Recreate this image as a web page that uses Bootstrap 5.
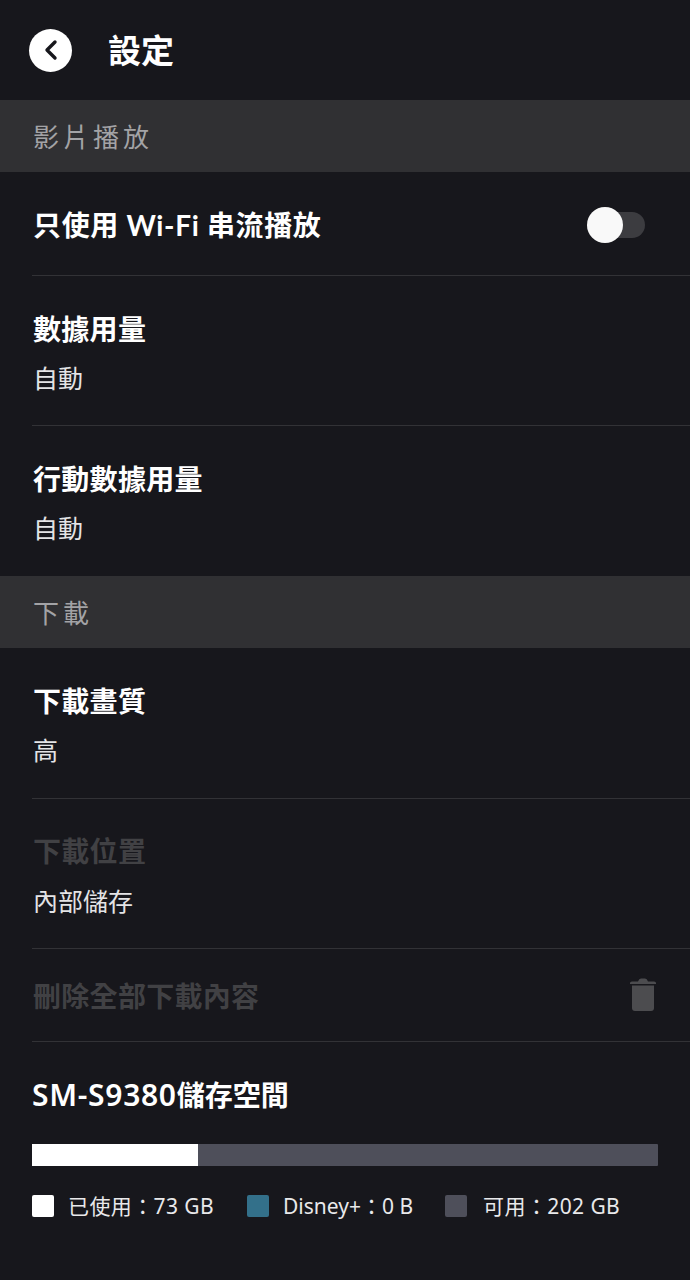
<!DOCTYPE html>
<html lang="zh-Hant">
<head>
<meta charset="utf-8">
<title>設定</title>
<link rel="stylesheet" href="https://cdn.jsdelivr.net/npm/bootstrap@5.3.0/dist/css/bootstrap.min.css">
<style>
html,body{background:#17171c;}
body{width:690px;height:1280px;overflow:hidden;color:#fff;font-family:"Lato","Noto Sans CJK TC",sans-serif;}
.top-bar{height:100px;padding-left:29px;gap:36px;}
.back-btn{width:43px;height:43px;border-radius:50%;background:#fff;border:0;padding:0;}
.page-title{font-size:33px;font-weight:700;margin:0;line-height:1;}
.sect-head{height:72px;padding-left:33px;padding-top:2px;background:#303033;color:#a3a3a6;font-size:26px;letter-spacing:4px;}
.set-row{margin-left:32px;padding-left:1px;border-bottom:1px solid #323236;}
.row-tall{height:150px;padding-top:34px;}
.row-grow{height:151px;}
.row-pos{padding-top:33px;}
.row-pos .row-val{margin-top:14px;}
.row-first{height:104px;padding-right:45px;padding-top:2px;}
.row-del{height:93px;padding-right:34px;padding-top:1px;}
.trash-icon{margin-bottom:3px;}
.row-name{font-size:28px;font-weight:700;line-height:38px;letter-spacing:.3px;}
.wifi-row{letter-spacing:.65px;}
.row-val{font-size:25px;line-height:34px;margin-top:13px;color:#e4e4e6;}
.dim{color:#414144;}
.row-last{border-bottom:0;}
.switch-track{width:58px;height:26px;}
.track-bg{position:absolute;right:0;top:0;width:58px;height:26px;border-radius:13px;background:#3c3c40;}
.knob{position:absolute;left:0;top:-5px;width:36px;height:36px;border-radius:50%;background:#f9f9f9;}
.store{padding:0 32px;}
.store-title{font-size:28px;font-weight:700;line-height:38px;margin-top:34px;font-family:"Noto Sans","Noto Sans CJK TC",sans-serif;}
.store-model{font-size:30px;font-weight:600;letter-spacing:.7px;}
.store-bar{height:22px;margin-top:30px;background:#4e4f5a;border-radius:1px;}
.store-used{width:166px;background:#fff;}
.legend{margin-top:27px;font-size:21px;letter-spacing:.4px;line-height:26px;color:#e9e9eb;font-family:"Noto Sans","Noto Sans CJK TC",sans-serif;}
.swatch{width:22px;height:22px;border-radius:2px;margin-right:14px;flex:none;}
.leg-item{margin-right:33px;}
.leg-item:nth-child(2){margin-right:32px;letter-spacing:0;}
.leg-item:nth-child(3) .swatch{margin-right:16px;}
</style>
</head>
<body>
<header class="top-bar d-flex align-items-center">
  <button class="back-btn d-flex align-items-center justify-content-center" aria-label="返回">
    <svg width="20" height="24" viewBox="0 0 20 24"><path d="M14 4 L6 12 L14 20" fill="none" stroke="#17171c" stroke-width="3.4" stroke-linecap="round" stroke-linejoin="round"/></svg>
  </button>
  <h1 class="page-title">設定</h1>
</header>

<div class="sect-head d-flex align-items-center">影片播放</div>
<div class="set-row row-first d-flex align-items-center justify-content-between">
  <div class="row-name wifi-row">只使用 Wi-Fi 串流播放</div>
  <div class="switch-track position-relative"><span class="track-bg"></span><span class="knob"></span></div>
</div>
<div class="set-row row-tall"><div class="row-name">數據用量</div><div class="row-val">自動</div></div>
<div class="set-row row-tall row-last"><div class="row-name">行動數據用量</div><div class="row-val">自動</div></div>

<div class="sect-head d-flex align-items-center">下載</div>
<div class="set-row row-tall row-grow"><div class="row-name">下載畫質</div><div class="row-val">高</div></div>
<div class="set-row row-tall row-pos"><div class="row-name dim">下載位置</div><div class="row-val">內部儲存</div></div>
<div class="set-row row-del d-flex align-items-center justify-content-between">
  <div class="row-name dim">刪除全部下載內容</div>
  <svg class="trash-icon" width="26" height="33" viewBox="0 0 26 33"><path d="M0 5 Q0 3.5 2 3.5 H8 Q9 .5 11 .5 H15 Q17 .5 18 3.5 H24 Q26 3.5 26 5 V6 H0 Z" fill="#4c4c4f"/><path d="M2 7.5 H24 V30 Q24 33 21 33 H5 Q2 33 2 30 Z" fill="#4c4c4f"/></svg>
</div>

<section class="store">
  <div class="store-title"><span class="store-model">SM-S9380</span>儲存空間</div>
  <div class="store-bar d-flex"><div class="store-used"></div></div>
  <div class="legend d-flex align-items-center">
    <span class="leg-item d-flex align-items-center"><span class="swatch bg-white"></span>已使用：73 GB</span>
    <span class="leg-item d-flex align-items-center"><span class="swatch" style="background:#33708a"></span>Disney+：0 B</span>
    <span class="leg-item d-flex align-items-center"><span class="swatch" style="background:#4e4f5a"></span>可用：202 GB</span>
  </div>
</section>
<script src="https://cdn.jsdelivr.net/npm/bootstrap@5.3.0/dist/js/bootstrap.bundle.min.js"></script>
</body>
</html>
